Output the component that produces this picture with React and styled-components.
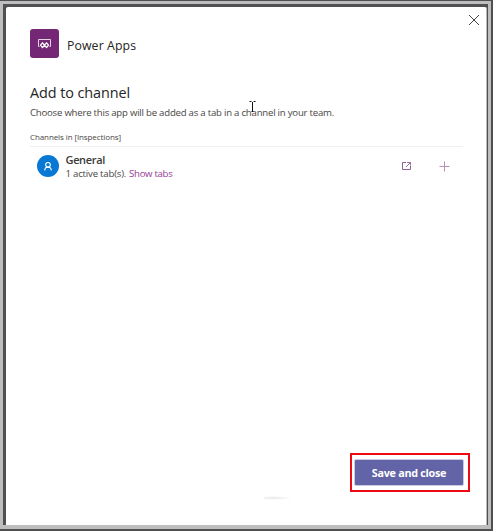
import React from 'react';
import styled, { createGlobalStyle } from 'styled-components';

const GlobalStyle = createGlobalStyle`
  * { box-sizing: border-box; }
  body { margin: 0; overflow: hidden; font-family: "Open Sans", "Noto Sans", sans-serif; }
`;

const Frame = styled.div`
  width: 493px;
  height: 531px;
  border: solid #4f4f51;
  border-width: 1px 2px 2px 0;
  background: #bebebf;
  padding: 3px 3px 4px 3px;
  position: relative;
`;

const Backdrop = styled.div`
  height: 100%;
  background: #505053;
  padding: 3px 1px 0 3px;
`;

const Dialog = styled.main`
  height: 100%;
  background: #fff;
  border: solid #b9b9ba;
  border-width: 0 1px 0 0;
  border-radius: 2px 2px 0 0;
  padding: 22px 23px 0 24px;
  display: flex;
  flex-direction: column;
`;

const Header = styled.header`
  display: flex;
  height: 29px;
  align-items: flex-start;
`;

const AppLogo = styled.span`
  width: 29px;
  height: 29px;
  border-radius: 3px;
  background: #742774;
  display: flex;
  align-items: center;
  justify-content: center;
`;

const Text = styled.span`
  display: block;
  white-space: nowrap;
  font-size: ${(p) => p.$size}px;
  line-height: ${(p) => p.$line}px;
  letter-spacing: ${(p) => p.$track || 0}px;
  font-weight: ${(p) => p.$weight || 400};
  color: ${(p) => p.$color || '#252424'};
`;

const AppName = styled(Text)`
  margin: 8px 0 0 8px;
`;

const CloseButton = styled.button`
  margin: -15px -17px 0 auto;
  padding: 0;
  border: 0;
  background: none;
  width: 12px;
  height: 12px;
  display: flex;
`;

const Intro = styled.section`
  margin-top: 25px;
  height: 63px;
`;

const Title = styled(Text).attrs({ as: 'h1' })`
  margin: 0;
`;

const Description = styled(Text)`
  margin-top: 2px;
`;

const ListLabel = styled(Text)`
  margin-top: 11px;
`;

const ChannelList = styled.section`
  border-top: 1px solid #f1f0f0;
  padding: 4px 13px 0 7px;
`;

const ChannelRow = styled.div`
  display: flex;
  height: 30px;
`;

const Avatar = styled.span`
  width: 22px;
  height: 22px;
  margin-top: 4px;
  border-radius: 50%;
  background: #0878d4;
  display: flex;
  align-items: center;
  justify-content: center;
`;

const ChannelInfo = styled.div`
  margin: 1px 0 0 6.5px;
`;

const SummaryLine = styled.div`
  display: flex;
`;

const TabsLink = styled(Text).attrs({ as: 'a' })`
  margin-left: 3px;
`;

const RowActions = styled.div`
  margin-left: auto;
  display: flex;
  gap: 27px;
  height: 30px;
  align-items: center;
`;

const Footer = styled.footer`
  margin: auto -7px 33px auto;
`;

const Highlight = styled.div`
  width: 120px;
  height: 39px;
  border: 2px solid #ee0a12;
  padding: 5px 6px 5px 3px;
`;

const SaveButton = styled.button`
  width: 108px;
  height: 25px;
  margin: 0;
  padding: 0;
  border: 0;
  border-radius: 1px;
  background: #6264a7;
  box-shadow: 0 0 0 1px #c9c9e2;
  font-family: inherit;
  display: flex;
  align-items: center;
  justify-content: center;
`;

const Pointer = styled.svg`
  position: absolute;
  left: 249px;
  top: 98px;
`;

const Smudge = styled.span`
  position: absolute;
  left: 264px;
  top: 495px;
  width: 30px;
  height: 4px;
  background: radial-gradient(ellipse at 30% 50%, #e6e6e6, #fff 65%);
`;

export default function App() {
  return (
    <>
      <GlobalStyle />
      <Frame>
        <Backdrop>
          <Dialog>
            <Header>
              <AppLogo>
                <svg width="15" height="12" viewBox="0 0 15 12" fill="none" stroke="#fff">
                  <path d="M2.5 8.500H1.500V1.500h12v7h-1" strokeWidth="1" opacity=".8" />
                  <path d="M5.500 4.800 7.500 7.200 5.500 9.600 3.500 7.200Z M9.500 4.800l2 2.400-2 2.400-2-2.400Z" strokeWidth="1.3" strokeLinejoin="round" />
                </svg>
              </AppLogo>
              <AppName $size={12.3} $line={18} $track={0.1} $weight={500}>Power Apps</AppName>
              <CloseButton aria-label="Close">
                <svg width="12" height="12" viewBox="0 0 12 12" stroke="#424242" strokeWidth="1">
                  <path d="M1 1l10 10M11 1L1 11" />
                </svg>
              </CloseButton>
            </Header>
            <Intro>
              <Title $size={14.4} $line={20} $track={-0.08} $weight={500}>Add to channel</Title>
              <Description $size={9.6} $line={15} $track={-0.22} $color="#484644">
                Choose where this app will be added as a tab in a channel in your team.
              </Description>
              <ListLabel $size={8} $line={12} $track={-0.1} $color="#484644">Channels in [Inspections]</ListLabel>
            </Intro>
            <ChannelList>
              <ChannelRow>
                <Avatar>
                  <svg width="10" height="11" viewBox="0 0 10 11" fill="none" stroke="#fff" strokeWidth="1.1">
                    <circle cx="5" cy="3.8" r="2.3" />
                    <path d="M1.800 9.500V9C1.800 7.200 3 6.200 5 6.200s3.200 1 3.200 2.800v.5" />
                  </svg>
                </Avatar>
                <ChannelInfo>
                  <Text $size={11} $line={15} $track={-0.35} $weight={600} $color="#3b3a39">General</Text>
                  <SummaryLine>
                    <Text $size={9.6} $line={13} $track={-0.2} $color="#484644">1 active tab(s).</Text>
                    <TabsLink $size={9.6} $line={13} $track={-0.3} $color="#953a95">Show tabs</TabsLink>
                  </SummaryLine>
                </ChannelInfo>
                <RowActions>
                  <svg width="11" height="10" viewBox="0 0 11 10" fill="none" stroke="#936092">
                    <path d="M5 1.500H1.500v7h8V5" />
                    <path d="M6 1.500h3.500v3M9.500 1.500L5 6" strokeWidth=".9" />
                  </svg>
                  <svg width="11" height="11" viewBox="0 0 11 11" stroke="#b78fb7">
                    <path d="M5.500 .5v10M.5 5.500h10" />
                  </svg>
                </RowActions>
              </ChannelRow>
            </ChannelList>
            <Footer>
              <Highlight>
                <SaveButton>
                  <Text $size={10.8} $line={20} $track={-0.28} $weight={700} $color="#fff">Save and close</Text>
                </SaveButton>
              </Highlight>
            </Footer>
          </Dialog>
        </Backdrop>
        <Smudge />
        <Pointer width="7" height="14" viewBox="0 0 7 14" stroke="#111" fill="none">
          <path d="M.5 2.500h2M4.500 2.500h2M3.500 3v9M2.500 12.500h2" />
        </Pointer>
      </Frame>
    </>
  );
}
